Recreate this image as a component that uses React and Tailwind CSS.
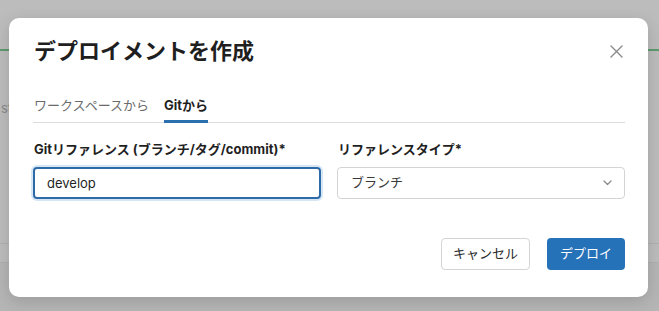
import { useState } from 'react';

const font = { fontFamily: 'Inter, "Noto Sans CJK JP", sans-serif' };

const App = () => {
  const [tab, setTab] = useState('git');
  const [gitRef, setGitRef] = useState('develop');
  const [refType, setRefType] = useState('branch');

  return (
    <div className="relative w-[659px] h-[311px] overflow-hidden bg-[#bcbcbc]" style={font}>
      {/* page behind the overlay */}
      <div className="flex flex-col h-full">
        <div className="h-[49px]" />
        <div className="h-[2px] bg-[#5e9a6e]" />
        <div className="h-[48px]" />
        <div className="pl-[1px] text-[13px] text-[#8a8a8a]">st</div>
        <div className="flex-1" />
        <div className="h-px bg-[#b0b0b0]" />
        <div className="h-[18px]" />
        <div className="h-px bg-[#b0b0b0]" />
        <div className="h-[48px] bg-[#b5b5b5]" />
      </div>

      {/* dialog */}
      <div className="absolute left-[9px] top-[18px] w-[639px] h-[279px] bg-white rounded-[10px] shadow-[0_4px_16px_rgba(0,0,0,0.15)] pl-[24px] pr-[23px] pt-[16px] flex flex-col">
        <div className="flex items-center justify-between h-[34px] pl-[1px]">
          <h2 className="text-[22px] font-bold text-[#1f1f1f] leading-none">デプロイメントを作成</h2>
          <button className="text-[#8a8a8a] mr-[2px]">
            <svg width="13" height="13" viewBox="0 0 13 13" fill="none" stroke="currentColor" strokeWidth="1.4" strokeLinecap="round">
              <path d="M1 1L12 12M12 1L1 12" />
            </svg>
          </button>
        </div>

        <div className="mt-[28px] flex gap-[15px] border-b border-[#dcdcdc] pl-[1px]">
          <button
            onClick={() => setTab('workspace')}
            className={`pb-[6px] text-[13px] leading-[18px] border-b-[3px] -mb-px ${tab === 'workspace' ? 'border-[#2a6fb0] font-bold text-[#1f1f1f]' : 'border-transparent text-[#6b6b6b]'}`}
          >
            ワークスペースから
          </button>
          <button
            onClick={() => setTab('git')}
            className={`pb-[6px] text-[13px] leading-[18px] border-b-[3px] -mb-px ${tab === 'git' ? 'border-[#2a6fb0] font-bold text-[#1f1f1f]' : 'border-transparent text-[#6b6b6b]'}`}
          >
            Gitから
          </button>
        </div>

        <div className="mt-[17px] grid grid-cols-2 gap-[16px]">
          <div>
            <label className="block pl-[1px] text-[13px] font-bold text-[#1f1f1f] leading-[18px] mb-[9px]">Gitリファレンス (ブランチ/タグ/commit)*</label>
            <input
              type="text"
              value={gitRef}
              onChange={(e) => setGitRef(e.target.value)}
              className="w-full h-[32px] px-[12px] text-[13px] text-[#1f1f1f] rounded-[4px] border-2 border-[#2d6aa8] shadow-[0_0_0_2px_#d6e6f5] outline-none"
            />
          </div>
          <div>
            <label className="block pl-[1px] text-[13px] font-bold text-[#1f1f1f] leading-[18px] mb-[9px]">リファレンスタイプ*</label>
            <div className="relative">
              <select
                value={refType}
                onChange={(e) => setRefType(e.target.value)}
                className="w-full h-[32px] pl-[13px] pr-[30px] text-[13px] text-[#3a3a3a] rounded-[4px] border border-[#d4d4d4] bg-white appearance-none outline-none"
              >
                <option value="branch">ブランチ</option>
                <option value="tag">タグ</option>
                <option value="commit">commit</option>
              </select>
              <svg className="absolute right-[13px] top-[13px] pointer-events-none" width="9" height="6" viewBox="0 0 9 6" fill="none" stroke="#8a8a8a" strokeWidth="1.3" strokeLinecap="round" strokeLinejoin="round">
                <path d="M1 1L4.5 4.5L8 1" />
              </svg>
            </div>
          </div>
        </div>

        <div className="mt-[39px] flex justify-end gap-[17px]">
          <button className="h-[32px] w-[89px] rounded-[4px] border border-[#d4d4d4] bg-white text-[13px] text-[#2a2a2a]">キャンセル</button>
          <button className="h-[32px] w-[78px] rounded-[4px] bg-[#2672b8] text-[13px] text-white">デプロイ</button>
        </div>
      </div>
    </div>
  );
};

export default App;
